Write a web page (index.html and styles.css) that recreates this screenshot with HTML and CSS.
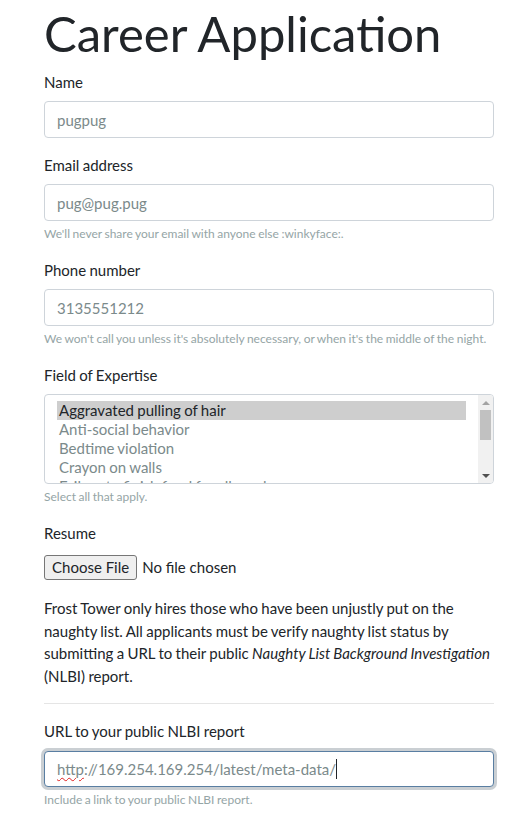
FILE: index.html
```html
<!DOCTYPE html>
<html lang="en">
<head>
<meta charset="utf-8">
<title>Career Application</title>
<link rel="stylesheet" href="styles.css">
</head>
<body>
<div class="container">
  <h1 class="title">Career Application</h1>
  <form class="app-form">
    <div class="form-group">
      <label class="form-label" for="name">Name</label>
      <input class="form-control" id="name" type="text" value="pugpug">
    </div>
    <div class="form-group">
      <label class="form-label" for="email">Email address</label>
      <input class="form-control" id="email" type="text" value="pug@pug.pug">
      <small class="form-text">We'll never share your email with anyone else :winkyface:.</small>
    </div>
    <div class="form-group">
      <label class="form-label" for="phone">Phone number</label>
      <input class="form-control" id="phone" type="text" value="3135551212">
      <small class="form-text">We won't call you unless it's absolutely necessary, or when it's the middle of the night.</small>
    </div>
    <div class="form-group">
      <label class="form-label" for="field">Field of Expertise</label>
      <div class="select-wrap">
        <select class="form-control multi" id="field" multiple>
          <option selected>Aggravated pulling of hair</option>
          <option>Anti-social behavior</option>
          <option>Bedtime violation</option>
          <option>Crayon on walls</option>
          <option>Failure to finish food for all meals</option>
          <option>Hitting a sibling</option>
          <option>Not cleaning room</option>
          <option>Tattling on siblings</option>
        </select>
        <div class="fake-scrollbar" aria-hidden="true">
          <div class="sb-btn"><span class="sb-arrow-up"></span></div>
          <div class="sb-track"><div class="sb-thumb"></div></div>
          <div class="sb-btn"><span class="sb-arrow-down"></span></div>
        </div>
      </div>
      <small class="form-text">Select all that apply.</small>
    </div>
    <div class="form-group">
      <label class="form-label" for="resume">Resume</label>
      <input class="form-control-file" id="resume" type="file">
    </div>
    <p class="intro">Frost Tower only hires those who have been unjustly put on the naughty list. All applicants must be verify naughty list status by submitting a URL to their public <em>Naughty List Background Investigation</em> (NLBI) report.</p>
    <hr class="divider">
    <div class="form-group">
      <label class="form-label">URL to your public NLBI report</label>
      <div class="form-control focused"><span class="misspelled">http</span>://169.254.169.254/latest/meta-data/<span class="caret"></span></div>
      <small class="form-text">Include a link to your public NLBI report.</small>
    </div>
  </form>
</div>
</body>
</html>
```

FILE: styles.css
```css
html, body {
  margin: 0;
  padding: 0;
  background: #ffffff;
}

body {
  font-family: Lato, "Noto Sans", sans-serif;
  font-size: 15px;
  line-height: 1.5;
  color: #212529;
  word-spacing: -0.035em;
}

.container {
  margin-left: 44px;
  width: 450px;
}

.title {
  font-size: 49px;
  font-weight: 400;
  line-height: 1.2;
  margin: 4px 0 8px;
  color: #212529;
  word-spacing: normal;
}

.app-form {
  margin: 0;
}

.form-group {
  margin-bottom: 16px;
}

.form-label {
  display: inline-block;
  margin-bottom: 8px;
}

.form-control {
  display: block;
  box-sizing: border-box;
  width: 100%;
  height: 36.5px;
  padding: 6px 12px;
  font-family: inherit;
  font-size: 15px;
  line-height: 1.5;
  word-spacing: inherit;
  color: #7b8a8b;
  background: #ffffff;
  border: 1px solid #ced4da;
  border-radius: 4px;
  margin: 0;
  outline: none;
}

.select-wrap {
  position: relative;
}

.form-control.multi {
  height: auto;
  padding: 6px 27px 6px 12px;
  overflow: hidden;
}

.form-control.multi option {
  color: #7b8a8b;
}

.form-control.multi option:checked {
  background: #cecece;
  color: #212529;
}

.fake-scrollbar {
  position: absolute;
  top: 1px;
  right: 1px;
  bottom: 1px;
  width: 15px;
  display: flex;
  flex-direction: column;
  background: #f1f1f1;
  border-radius: 0 3px 3px 0;
}

.sb-btn {
  height: 15px;
  display: flex;
  align-items: center;
  justify-content: center;
}

.sb-arrow-up {
  width: 0;
  height: 0;
  border-left: 4px solid transparent;
  border-right: 4px solid transparent;
  border-bottom: 4px solid #a3a3a3;
}

.sb-arrow-down {
  width: 0;
  height: 0;
  border-left: 4px solid transparent;
  border-right: 4px solid transparent;
  border-top: 4px solid #505050;
}

.sb-track {
  flex: 1;
  padding: 0 2px;
}

.sb-thumb {
  height: 30px;
  background: #c1c1c1;
}

.form-control.focused {
  border-color: #597ea2;
  box-shadow: 0 0 0 3px rgba(44, 62, 80, 0.25);
  white-space: nowrap;
}

.misspelled {
  text-decoration: underline wavy #e02020;
  text-decoration-thickness: 1px;
  text-underline-offset: 2px;
}

.caret {
  display: inline-block;
  width: 1px;
  height: 20px;
  background: #212529;
  vertical-align: -4px;
}

.form-text {
  display: block;
  margin-top: 4px;
  font-size: 12px;
  line-height: 1.5;
  color: #95a5a6;
}

.form-control-file {
  display: block;
  box-sizing: border-box;
  width: 100%;
  height: 28.25px;
  padding: 2.5px 0 0;
  font-family: inherit;
  font-size: 15px;
  line-height: 19px;
  color: #212529;
}

.form-control-file::file-selector-button {
  font-family: inherit;
  font-size: 15px;
  line-height: 19px;
  padding: 2px 7px;
  margin-right: 5px;
  color: #212529;
  background: #efefef;
  border: 1px solid #767676;
  border-radius: 3px;
}

.intro {
  margin: 0 0 16px;
}

.divider {
  margin: 16px 0;
  border: 0;
  border-top: 1px solid rgba(0, 0, 0, 0.1);
}
```
